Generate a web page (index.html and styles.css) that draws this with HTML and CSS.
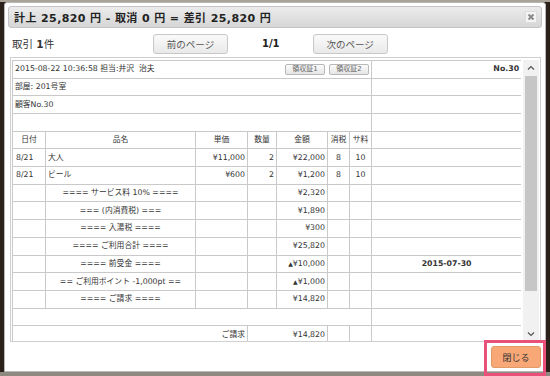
FILE: index.html
```html
<!DOCTYPE html>
<html lang="ja">
<head>
<meta charset="utf-8">
<link rel="stylesheet" href="styles.css">
</head>
<body>
<div class="dialog">
  <div class="titlebar">
    <span class="title">計上 25,820 円 - 取消 0 円 = 差引 25,820 円</span>
    <span class="close-btn"><svg width="8" height="8" viewBox="0 0 8 8"><path d="M1.5 1.5 L6.5 6.5 M6.5 1.5 L1.5 6.5" stroke="#8a8a8a" stroke-width="2"/></svg></span>
  </div>
  <div class="toolbar">
    <span class="count">取引 <b>1</b>件</span>
    <button class="btn">前のページ</button>
    <span class="pager">1/1</span>
    <button class="btn">次のページ</button>
  </div>
  <div class="scrollbox">
    <div class="viewport">
      <table class="sheet">
        <colgroup>
          <col style="width:33px"><col style="width:150px"><col style="width:52px"><col style="width:29px"><col style="width:51px"><col style="width:22px"><col style="width:22px"><col style="width:150px">
        </colgroup>
        <tr>
          <td colspan="7" class="l"><div class="meta"><span>2015-08-22 10:36:58 担当:井沢&nbsp;&nbsp;治夫</span><span class="rbtns"><span class="rbtn">領収証1</span><span class="rbtn">領収証2</span></span></div></td>
          <td class="r b">No.30</td>
        </tr>
        <tr><td colspan="7" class="l">部屋: 201号室</td><td></td></tr>
        <tr><td colspan="7" class="l">顧客No.30</td><td></td></tr>
        <tr><td colspan="7"></td><td></td></tr>
        <tr class="head"><td class="c">日付</td><td class="c">品名</td><td class="c">単価</td><td class="c">数量</td><td class="c">金額</td><td class="c">消税</td><td class="c">サ料</td><td></td></tr>
        <tr><td class="l d">8/21</td><td class="l">大人</td><td class="r">¥11,000</td><td class="r">2</td><td class="r">¥22,000</td><td class="c">8</td><td class="c">10</td><td></td></tr>
        <tr><td class="l d">8/21</td><td class="l">ビール</td><td class="r">¥600</td><td class="r">2</td><td class="r">¥1,200</td><td class="c">8</td><td class="c">10</td><td></td></tr>
        <tr><td></td><td class="c">==== サービス料 10% ====</td><td></td><td></td><td class="r">¥2,320</td><td></td><td></td><td></td></tr>
        <tr><td></td><td class="c">=== (内消費税) ===</td><td></td><td></td><td class="r">¥1,890</td><td></td><td></td><td></td></tr>
        <tr><td></td><td class="c">==== 入湯税 ====</td><td></td><td></td><td class="r">¥300</td><td></td><td></td><td></td></tr>
        <tr><td></td><td class="c">==== ご利用合計 ====</td><td></td><td></td><td class="r">¥25,820</td><td></td><td></td><td></td></tr>
        <tr><td></td><td class="c">==== 前受金 ====</td><td></td><td></td><td class="r"><span class="tri">▲</span>¥10,000</td><td></td><td></td><td class="c b">2015-07-30</td></tr>
        <tr><td></td><td class="c">== ご利用ポイント -1,000pt ==</td><td></td><td></td><td class="r"><span class="tri">▲</span>¥1,000</td><td></td><td></td><td></td></tr>
        <tr><td></td><td class="c">==== ご請求 ====</td><td></td><td></td><td class="r">¥14,820</td><td></td><td></td><td></td></tr>
        <tr><td colspan="7"></td><td></td></tr>
        <tr><td colspan="3" class="r">ご請求</td><td colspan="2" class="r">¥14,820</td><td></td><td></td><td></td></tr>
        <tr><td colspan="7"></td><td></td></tr>
        <tr><td colspan="7"></td><td></td></tr>
      </table>
    </div>
    <div class="scrollbar">
      <div class="sb-arrow"><svg width="8" height="6" viewBox="0 0 8 6"><path d="M1 4.5 L4 1.5 L7 4.5" fill="none" stroke="#555" stroke-width="1.2"/></svg></div>
      <div class="sb-track"><div class="sb-thumb"></div></div>
      <div class="sb-arrow"><svg width="8" height="6" viewBox="0 0 8 6"><path d="M1 1.5 L4 4.5 L7 1.5" fill="none" stroke="#555" stroke-width="1.2"/></svg></div>
    </div>
  </div>
  <div class="footer">
    <button class="btn-close">閉じる</button>
  </div>
</div>
<div class="highlight"></div>
</body>
</html>
```

FILE: styles.css
```css
html, body {
  margin: 0;
  padding: 0;
}
body {
  width: 550px;
  height: 376px;
  overflow: hidden;
  position: relative;
  background: linear-gradient(to bottom, #a8a297 0, #a8a297 2px, #2c211a 2px, #2c211a 372px, #8f8a7f 372px);
  font-family: "DejaVu Sans", "Noto Sans CJK JP", sans-serif;
  color: #333;
  padding: 2px 4px 0 4px;
  box-sizing: border-box;
}
.dialog {
  width: 542px;
  height: 370px;
  background: #fff;
  border: 1px solid #b8b8b8;
  border-radius: 3px 3px 0 0;
  padding: 3px;
  box-sizing: border-box;
  display: flex;
  flex-direction: column;
}
.titlebar {
  height: 22px;
  box-sizing: border-box;
  border: 1px solid #c4c4c4;
  border-radius: 3px;
  background: linear-gradient(to bottom, #ececec, #d6d6d6);
  display: flex;
  align-items: center;
  justify-content: space-between;
  padding: 0 4px 0 5px;
}
.title {
  font-weight: bold;
  font-size: 11px;
  color: #222;
  letter-spacing: 0.4px;
}
.close-btn {
  width: 10px;
  height: 10px;
  background: #f4f4f4;
  border: 1px solid #dcdcdc;
  display: flex;
  align-items: center;
  justify-content: center;
}
.toolbar {
  display: flex;
  align-items: center;
  height: 20px;
  margin-top: 6px;
  padding-left: 4px;
}
.count {
  font-size: 10.5px;
  width: 141px;
  color: #333;
}
.count b { font-weight: bold; }
.btn {
  width: 75px;
  height: 20px;
  border: 1px solid #c8c8c8;
  border-radius: 3px;
  background: linear-gradient(to bottom, #fafafa, #e9e9e9);
  font-family: "DejaVu Sans", "Noto Sans CJK JP", sans-serif;
  font-size: 9.5px;
  color: #555;
  padding: 0;
}
.pager {
  font-weight: bold;
  font-size: 10px;
  margin: 0 33px 0 34px;
  color: #222;
}
.scrollbox {
  margin: 3px 1px 0 2px;
  height: 286px;
  box-sizing: border-box;
  border: 1px solid #cfcfcf;
  padding: 2px 1px 0 1px;
  display: flex;
  gap: 2px;
  overflow: hidden;
}
.viewport {
  width: 509px;
  overflow: hidden;
}
.sheet {
  width: 509px;
  table-layout: fixed;
  border-collapse: collapse;
  font-size: 7.8px;
}
.sheet td {
  border: 1px solid #c9c9c9;
  height: 16.7px;
  padding: 0 2px;
  white-space: nowrap;
  overflow: hidden;
  line-height: 10px;
}
.sheet .l { text-align: left; }
.sheet .r { text-align: right; }
.sheet .c { text-align: center; }
.sheet .b { font-weight: bold; }
.sheet .d { padding-left: 3px; }
.tri { font-size: 6px; }
.meta {
  display: flex;
  align-items: center;
  justify-content: space-between;
}
.rbtns {
  display: flex;
  gap: 4px;
}
.rbtn {
  width: 40px;
  height: 11px;
  box-sizing: border-box;
  border: 1px solid #b8b8b8;
  border-radius: 2px;
  background: linear-gradient(to bottom, #fbfbfb, #e6e6e6);
  font-size: 7px;
  line-height: 9px;
  color: #666;
  text-align: center;
}
.scrollbar {
  width: 16px;
  height: 282px;
  background: #f1f1f1;
  display: flex;
  flex-direction: column;
}
.sb-arrow {
  height: 16px;
  display: flex;
  align-items: center;
  justify-content: center;
}
.sb-track {
  flex: 1;
  padding: 0 2px;
}
.sb-thumb {
  height: 215px;
  background: #c6c6c6;
}
.footer {
  display: flex;
  justify-content: flex-end;
  margin-top: 4px;
  padding-right: 1px;
}
.btn-close {
  width: 50px;
  height: 22px;
  border: 1px solid #e29a66;
  border-radius: 3px;
  background: #f8a877;
  font-family: "DejaVu Sans", "Noto Sans CJK JP", sans-serif;
  font-size: 9px;
  color: #333;
  padding: 0;
}
.highlight {
  position: absolute;
  left: 484px;
  top: 340px;
  width: 62px;
  height: 36px;
  box-sizing: border-box;
  border: 3px solid #e9507a;
}
```
